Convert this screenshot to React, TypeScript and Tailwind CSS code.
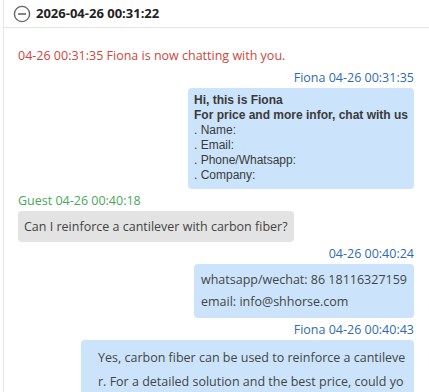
function MinusCircle() {
  return (
    <svg width="18" height="18" viewBox="0 0 18 18" className="shrink-0">
      <circle cx="9" cy="9" r="7.6" fill="none" stroke="#666" strokeWidth="1.4" />
      <line x1="5" y1="9" x2="13" y2="9" stroke="#666" strokeWidth="1.6" />
    </svg>
  )
}

function Meta({ children, color, right }: { children: string; color: string; right?: boolean }) {
  return (
    <div className={`text-[12.5px] leading-[16px] ${color} ${right ? "text-right" : ""}`}>{children}</div>
  )
}

export default function App() {
  const ui = { fontFamily: '"Open Sans", "Noto Sans CJK SC", sans-serif' }
  const arial = { fontFamily: '"Liberation Sans", Arial, sans-serif' }
  return (
    <div className="w-[426px] h-[392px] overflow-hidden bg-white ml-[3px] border-l border-[#e6e6e6]" style={ui}>
      <div className="flex items-center gap-[5px] h-[28px] pl-[9px] border-b border-[#e4e4e4]">
        <MinusCircle />
        <span className="text-[13px] font-bold text-[#222]">2026-04-26 00:31:22</span>
      </div>
      <div className="pl-[14px] pr-[15px] pt-[20px]">
        <Meta color="text-[#d0453b]">04-26 00:31:35 Fiona is now chatting with you.</Meta>
        <div className="mt-[6px]">
          <Meta color="text-[#2e6db2]" right>Fiona 04-26 00:31:35</Meta>
        </div>
        <div className="flex justify-end mt-[2px]">
          <div className="bg-[#cce4fb] rounded-[4px] px-[6px] pt-[5px] pb-[6px] text-[12px] leading-[15px] text-[#3a3a3a]" style={arial}>
            <div className="font-bold">Hi, this is Fiona</div>
            <div className="font-bold">For price and more infor, chat with us</div>
            <div>. Name:</div>
            <div>. Email:</div>
            <div>. Phone/Whatsapp:</div>
            <div>. Company:</div>
          </div>
        </div>
        <div className="mt-[4px]">
          <Meta color="text-[#4aa85a]">Guest 04-26 00:40:18</Meta>
        </div>
        <div className="flex mt-[2px]">
          <div className="bg-[#e3e3e3] rounded-[4px] px-[6px] py-[6px] text-[12.5px] leading-[19px] text-[#444]">
            Can I reinforce a cantilever with carbon fiber?
          </div>
        </div>
        <div className="mt-[4px]">
          <Meta color="text-[#2e6db2]" right>04-26 00:40:24</Meta>
        </div>
        <div className="flex justify-end mt-[2px]">
          <div className="bg-[#cce4fb] rounded-[4px] px-[7px] py-[5px] text-[12.5px] leading-[22px] text-[#444]">
            <div>whatsapp/wechat: 86 18116327159</div>
            <div>email: info@shhorse.com</div>
          </div>
        </div>
        <div className="mt-[4px]">
          <Meta color="text-[#2e6db2]" right>Fiona 04-26 00:40:43</Meta>
        </div>
        <div className="flex justify-end mt-[2px]">
          <div className="bg-[#cce4fb] rounded-[4px] w-[333px] pl-[17px] pr-[4px] pt-[6px] pb-[5px] text-[12.5px] leading-[24px] text-[#444] break-all">
            Yes, carbon fiber can be used to reinforce a cantilever. For a detailed solution and the best price, could you share your contact details?
          </div>
        </div>
      </div>
    </div>
  )
}
